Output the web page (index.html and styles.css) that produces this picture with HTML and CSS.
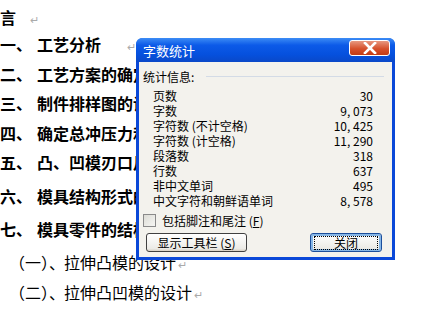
FILE: index.html
```html
<!DOCTYPE html>
<html lang="zh">
<head>
    <meta charset="UTF-8">
    <title>字数统计</title>
    <link rel="stylesheet" href="styles.css">
</head>
<body>
    <!-- document behind the dialog -->
    <div class="doc">
        <div class="line head">言<span class="mark first">↵</span></div>
        <div class="line h"><span class="num">一、</span>工艺分析<span class="mark far">↵</span></div>
        <div class="line h"><span class="num">二、</span>工艺方案的确定</div>
        <div class="line h"><span class="num">三、</span>制件排样图的设计</div>
        <div class="line h"><span class="num">四、</span>确定总冲压力和</div>
        <div class="line h"><span class="num">五、</span>凸、凹模刃口尺</div>
        <div class="line h wide"><span class="num">六、</span>模具结构形式的</div>
        <div class="line h wide"><span class="num">七、</span>模具零件的结构</div>
        <div class="line sub first-sub"><span class="snum">（一）、</span>拉伸凸模的设计<span class="mark">↵</span></div>
        <div class="line sub"><span class="snum">（二）、</span>拉伸凸凹模的设计<span class="mark">↵</span></div>
    </div>

    <!-- word count dialog -->
    <div class="dialog">
        <div class="titlebar">
            <span class="title">字数统计</span>
            <span class="close-x">
                <svg width="14" height="12" viewBox="0 0 14 12">
                    <path d="M2 1 L12 11 M12 1 L2 11" stroke="#fff" stroke-width="2.6" stroke-linecap="square"/>
                </svg>
            </span>
        </div>
        <div class="body">
            <div class="group">统计信息:<span class="rule"></span></div>
            <div class="stats">
                <div class="row"><span>页数</span><span>30</span></div>
                <div class="row"><span>字数</span><span>9, 073</span></div>
                <div class="row"><span>字符数 (不计空格)</span><span>10, 425</span></div>
                <div class="row"><span>字符数 (计空格)</span><span>11, 290</span></div>
                <div class="row"><span>段落数</span><span>318</span></div>
                <div class="row"><span>行数</span><span>637</span></div>
                <div class="row"><span>非中文单词</span><span>495</span></div>
                <div class="row"><span>中文字符和朝鲜语单词</span><span>8, 578</span></div>
            </div>
            <div class="check"><span class="box"></span>包括脚注和尾注 (<u>F</u>)</div>
            <div class="buttons">
                <button class="btn">显示工具栏 (<u>S</u>)</button>
                <button class="btn default"><span class="focus">关闭</span></button>
            </div>
        </div>
    </div>
</body>
</html>
```

FILE: styles.css
```css
body {
    margin: 0;
    background: #fff;
    width: 422px;
    height: 313px;
    overflow: hidden;
    position: relative;
    font-family: "Noto Sans CJK SC", sans-serif;
}
.doc {
    padding-top: 4px;
}
.line {
    height: 29.5px;
    line-height: 29.5px;
    font-size: 16px;
    color: #000;
    white-space: nowrap;
}
.line.h, .line.head {
    font-weight: bold;
}
.line.head {
    height: 26px;
    line-height: 26px;
}
.line.wide {
    margin-top: 4px;
}
.line.sub {
    height: 30px;
    line-height: 30px;
    padding-left: 9px;
}
.line.first-sub {
    margin-top: 2px;
}
.num {
    display: inline-block;
    width: 37px;
}
.snum {
    display: inline-block;
    width: 55px;
}
.mark {
    color: #aaa;
    font-size: 11px;
    font-weight: normal;
    margin-left: 2px;
}
.mark.first {
    margin-left: 14px;
}
.mark.far {
    margin-left: 26px;
}

.dialog {
    position: absolute;
    left: 136px;
    top: 38px;
    width: 259px;
    height: 222px;
    background: #0a48d8;
    border-radius: 7px 7px 0 0;
    box-sizing: border-box;
    padding: 0 3px 3px 3px;
    display: flex;
    flex-direction: column;
    font-family: "Noto Sans CJK SC", sans-serif;
    font-size: 12px;
}
.titlebar {
    height: 24px;
    display: flex;
    align-items: center;
    justify-content: space-between;
    padding: 0 5px 0 7px;
    background: linear-gradient(#3c8cf5, #0c5ae8 30%, #0550dd 70%, #0a48c8);
    border-radius: 6px 6px 0 0;
    margin: 0 -3px;
}
.title {
    color: #fff;
    font-size: 13px;
}
.close-x {
    width: 41px;
    height: 16px;
    border-radius: 3px;
    border: 1px solid #fff;
    background: linear-gradient(#e89880, #d6512c 55%, #c23b14);
    display: flex;
    align-items: center;
    justify-content: center;
    box-sizing: border-box;
    margin-top: -4px;
}
.body {
    flex: 1;
    background: #f3f2ed;
    padding: 5px 6px 0 4px;
    color: #000;
}
.group {
    display: flex;
    align-items: center;
    height: 18px;
}
.rule {
    flex: 1;
    height: 1px;
    background: #d3dbe6;
    margin-left: 12px;
    margin-right: 2px;
}
.stats {
    padding: 3px 13px 0 10px;
}
.row {
    display: flex;
    justify-content: space-between;
    height: 15px;
    line-height: 15px;
    font-size: 12px;
}
.check {
    display: flex;
    align-items: center;
    height: 18px;
    margin-top: 3px;
}
.box {
    width: 11px;
    height: 11px;
    border: 1px solid #8a8a8a;
    background: linear-gradient(135deg, #dcdcd6, #f6f6f3);
    margin-right: 6px;
}
.buttons {
    display: flex;
    justify-content: space-between;
    margin-top: 4px;
    padding: 0 4px 0 3px;
}
.btn {
    height: 19px;
    padding: 0;
    border: 1px solid #404040;
    border-radius: 3px;
    background: linear-gradient(#ffffff, #ecebe6 85%, #d6d0c5);
    font-family: "Noto Sans CJK SC", sans-serif;
    font-size: 12px;
    color: #000;
    width: 101px;
    line-height: 16px;
}
.btn.default {
    width: 72px;
    border-color: #1c4f9c;
    box-shadow: inset 0 0 0 2px #86b6e6;
}
.focus {
    display: inline-block;
    width: 62px;
    border: 1px dotted #000;
    line-height: 12px;
}
```
